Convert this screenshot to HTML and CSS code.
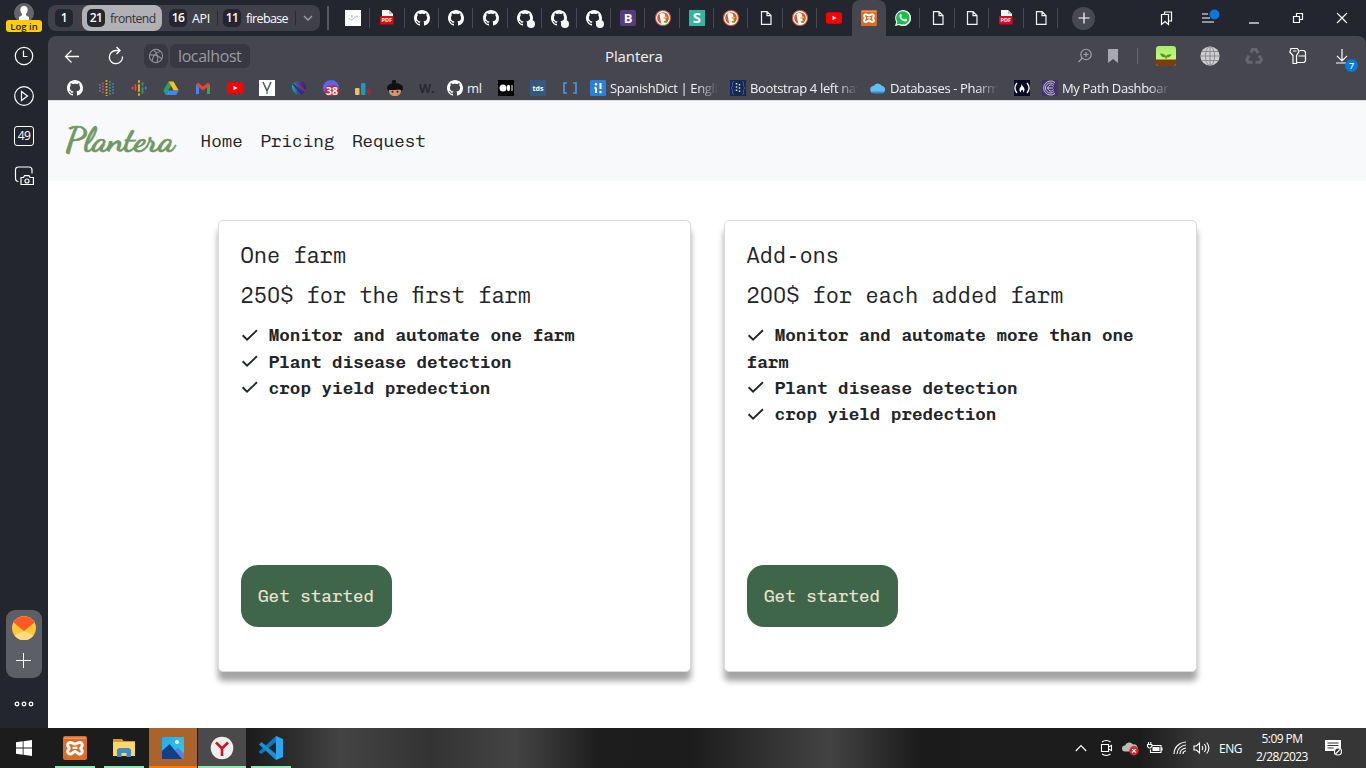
FILE: index.html
```html
<!DOCTYPE html>
<html lang="en">
<head>
<meta charset="utf-8">
<title>Plantera</title>
<link rel="stylesheet" href="styles.css">
</head>
<body>
<svg class="defs" width="0" height="0">
  <defs>
    <linearGradient id="gBlue" x1="0" y1="0" x2="1" y2="1"><stop offset="0" stop-color="#28a8e8"/><stop offset="1" stop-color="#2ad0f0"/></linearGradient>
    <linearGradient id="gSky" x1="0" y1="0" x2="0" y2="1"><stop offset="0" stop-color="#a6ee6a"/><stop offset="1" stop-color="#d9fa8c"/></linearGradient>
    <linearGradient id="gOrb" x1="0" y1="0" x2="1" y2="0"><stop offset="0" stop-color="#2fa5b0"/><stop offset=".4" stop-color="#2a5a98"/><stop offset=".7" stop-color="#502a78"/><stop offset="1" stop-color="#26306a"/></linearGradient>
  </defs>
  <symbol id="gh" viewBox="0 0 16 16"><path fill="#fff" d="M8 0C3.58 0 0 3.58 0 8c0 3.54 2.29 6.53 5.47 7.59.4.07.55-.17.55-.38 0-.19-.01-.82-.01-1.49-2.01.37-2.53-.49-2.69-.94-.09-.23-.48-.94-.82-1.13-.28-.15-.68-.52-.01-.53.63-.01 1.08.58 1.23.82.72 1.21 1.87.87 2.33.66.07-.52.28-.87.51-1.07-1.78-.2-3.64-.89-3.64-3.95 0-.87.31-1.59.82-2.15-.08-.2-.36-1.02.08-2.12 0 0 .67-.21 2.2.82.64-.18 1.32-.27 2-.27s1.36.09 2 .27c1.53-1.04 2.2-.82 2.2-.82.44 1.1.16 1.92.08 2.12.51.56.82 1.27.82 2.15 0 3.07-1.87 3.75-3.65 3.95.29.25.54.73.54 1.48 0 1.07-.01 1.93-.01 2.2 0 .21.15.46.55.38A8.01 8.01 0 0 0 16 8c0-4.42-3.58-8-8-8z"/></symbol>
  <symbol id="ghdot" viewBox="0 0 18 18"><use href="#gh" width="16" height="16"/><circle cx="14" cy="14" r="4" fill="#f4f4f4"/></symbol>
  <symbol id="pdf" viewBox="0 0 16 16"><path fill="#f5f5f5" d="M3 0h7l4 4v10H3z"/><path fill="#bbb" d="M10 0v4h4z"/><rect x="1" y="6" width="13.5" height="8.5" rx="1" fill="#e30613"/><text x="7.8" y="12.4" font-size="5.6" font-weight="700" text-anchor="middle" fill="#fff">PDF</text></symbol>
  <symbol id="duck" viewBox="0 0 16 16"><circle cx="8" cy="8" r="8" fill="#e2613a"/><circle cx="8" cy="8" r="6.4" fill="#dd5833" stroke="#fff" stroke-width="1.1"/><path fill="#fff" d="M4.500 4.200C6 2.400 9.800 2.600 10.200 5.500c.2 1.600 0 2.300.3 3.500l.8 4.800-4.600.8C5.800 11.500 5 8 4.500 4.200z"/><path fill="#f9b32b" d="M8.300 7.200c2-.8 3.300-.6 4.300-.2-.8 1.200-2.400 1.900-4.300 1.700z"/><path fill="#4caf3a" d="M8.500 11.200l3.200-.8v2.600l-2.800-.5z"/></symbol>
  <symbol id="doc" viewBox="0 0 16 16"><path fill="none" stroke="#f2f2f2" stroke-width="1.200" d="M3.500 1.600h5.500l4 4v8.800H3.500zM9 1.600v4h4"/></symbol>
  <symbol id="yt" viewBox="0 0 16 16"><rect y="2.300" width="16" height="11.400" rx="2.800" fill="#f00"/><path fill="#fff" d="M6.500 5.800l4 2.200-4 2.200z"/></symbol>
  <symbol id="xampp" viewBox="0 0 24 24"><rect width="24" height="24" rx="2" fill="#dc6c28"/><path d="M1 2.200h22" stroke="#ef9a62" stroke-width="1.500"/><path fill="none" stroke="#fff" stroke-width="3" stroke-linejoin="round" d="M7.500 6.500c1.800 0 2.700 1.500 4.500 1.500s2.700-1.500 4.500-1.500 3 1.200 2.800 2.800-1.500 1.800-1.500 3 1.300 1.400 1.500 3-1 2.800-2.800 2.800-2.700-2.500-4.500-2.500-2.700 2.500-4.500 2.500-3-1.200-2.800-2.800 1.500-1.800 1.500-3-1.300-1.400-1.500-3S5.700 6.500 7.500 6.500z"/><path d="M9.500 11.800h5" stroke="#fff" stroke-width="2.200"/></symbol>
  <symbol id="globe" viewBox="0 0 20 20"><circle cx="10" cy="10" r="9.600" fill="#cfcfcf"/><g fill="none" stroke="#85858b" stroke-width=".9"><ellipse cx="10" cy="10" rx="4.500" ry="9.600"/><path d="M10 0v20M0 10h20M2 5.500h16M2 14.500h16"/></g></symbol>
</svg>

<div class="desktop">
  <aside class="sidebar">
    <div class="account">
      <svg width="20" height="17" viewBox="0 0 20 17"><circle cx="10" cy="10" r="10" fill="#66666a"/><path fill="#fff" d="M10 3c2.600 0 3.800 1.700 3.700 4-.1 2-1 3.300-1.700 4 0 1.500.4 2 3 3v3H5v-3c2.600-1 3-1.500 3-3-.7-.7-1.600-2-1.700-4C6.200 4.700 7.400 3 10 3z"/></svg>
      <span class="login">Log in</span>
    </div>
    <svg class="side-icon" viewBox="0 0 20 20"><circle cx="10" cy="10" r="8.700"/><path d="M9.500 4.500V10.500h4"/></svg>
    <svg class="side-icon" viewBox="0 0 20 20"><circle cx="10" cy="10" r="9.300"/><path d="M7.500 5.500v9l6-4.500z"/></svg>
    <div class="count">49</div>
    <svg class="side-icon" viewBox="0 0 20 20"><path d="M4.500 15.500C2 15.500 1.500 14 1.500 12V4c0-2 1-3 3-3h10.500c2 0 3 1 3 3v3.500M7 18V11.500h2.500l1-1.800h4.500l1 1.800h3.400V18.500H7z"/><circle cx="13" cy="15" r="2"/></svg>
    <div class="pinned">
      <svg width="24" height="24" viewBox="0 0 24 24"><circle cx="12" cy="12" r="12" fill="#ffc636"/><path fill="#ffdc82" d="M12 14.500l9.500 5A12 12 0 0 1 2.500 19.500z"/><path fill="#ff5a26" d="M1.500 6.500A12 12 0 0 1 22.500 6.500L12 15z"/></svg>
      <svg width="16" height="16" viewBox="0 0 16 16"><path d="M7.500 0v15M0 7.500h15" stroke="#fff"/></svg>
    </div>
    <svg class="dots" width="20" height="6" viewBox="0 0 20 6"><g fill="none" stroke="#fff" stroke-width="1.300"><circle cx="3" cy="3" r="1.800"/><circle cx="10" cy="3" r="1.800"/><circle cx="17" cy="3" r="1.800"/></g></svg>
  </aside>

  <div class="browser">
    <div class="tabstrip">
      <div class="groups">
        <div class="group first"><b>1</b></div>
        <div class="group active"><b>21</b><span>frontend</span></div>
        <div class="group api"><b>16</b><span>API</span></div>
        <div class="group fire"><b>11</b><span>firebase</span></div>
        <svg width="10" height="6" viewBox="0 0 10 6"><path d="M1 1l4 4 4-4" fill="none" stroke="#a0a0a8" stroke-width="1.300"/></svg>
      </div>
      <div class="tabs">
        <div class="tab"><svg viewBox="0 0 16 16"><rect width="16" height="16" fill="#fff"/><path d="M4 8c1.500 2.500 3.500 2.500 5 0M7 5v3M10 6v2M12 5.500v2" fill="none" stroke="#9bb6cc"/></svg></div>
        <div class="tab"><svg><use href="#pdf"/></svg></div>
        <div class="tab"><svg><use href="#gh"/></svg></div>
        <div class="tab"><svg><use href="#gh"/></svg></div>
        <div class="tab"><svg><use href="#gh"/></svg></div>
        <div class="tab"><svg class="dotted"><use href="#ghdot"/></svg></div>
        <div class="tab"><svg class="dotted"><use href="#ghdot"/></svg></div>
        <div class="tab"><svg class="dotted"><use href="#ghdot"/></svg></div>
        <div class="tab"><svg viewBox="0 0 16 16"><rect width="16" height="16" rx="2" fill="#563d7c"/><text x="8" y="12.700" font-size="13" font-weight="700" text-anchor="middle" fill="#fff">B</text></svg></div>
        <div class="tab"><svg><use href="#duck"/></svg></div>
        <div class="tab"><svg class="over" viewBox="0 0 16 16"><rect width="16" height="16" fill="#32b5a4"/><text x="8" y="13.300" font-size="15" font-weight="700" text-anchor="middle" fill="#fff">S</text></svg></div>
        <div class="tab"><svg><use href="#duck"/></svg></div>
        <div class="tab"><svg><use href="#doc"/></svg></div>
        <div class="tab"><svg><use href="#duck"/></svg></div>
        <div class="tab before"><svg><use href="#yt"/></svg></div>
        <div class="tab current"><svg><use href="#xampp"/></svg></div>
        <div class="tab"><svg viewBox="0 0 16 16"><path fill="#fff" d="M0 16l1.200-4A8 8 0 1 1 4 14.900z"/><path fill="#12c04a" d="M1.600 14.400l.8-2.600A6.700 6.700 0 1 1 4.500 13.700z"/><path fill="#fff" d="M5 4.200c.6-.5 1.100-.4 1.300.1l.6 1.400c.1.400-.7.900-.6 1.200.6 1.200 1.500 2 2.800 2.600.4.100.9-1 1.200-.9l1.500.8c.5.300.1 1.500-.6 1.900-1.400.8-3.700-.3-5.100-1.700S3.600 5.500 5 4.200z"/></svg></div>
        <div class="tab"><svg><use href="#doc"/></svg></div>
        <div class="tab"><svg><use href="#doc"/></svg></div>
        <div class="tab"><svg><use href="#pdf"/></svg></div>
        <div class="tab"><svg><use href="#doc"/></svg></div>
      </div>
      <div class="newtab"><svg width="12" height="12" viewBox="0 0 12 12"><path d="M6 .5v11M.5 6h11" stroke="#fff" stroke-width="1.200"/></svg></div>
      <div class="winctl">
        <svg viewBox="0 0 16 16"><path d="M6.500 4V2h7v9h-2.500M3.500 4.500h7v10l-3.500-3-3.500 3z"/></svg>
        <svg viewBox="0 0 16 16"><path d="M0 4h6M0 8h8M0 12h12"/><circle cx="12.500" cy="4.500" r="5" fill="#0a78dc" stroke="none"/></svg>
        <svg viewBox="0 0 16 16"><path d="M3 13h10"/></svg>
        <svg viewBox="0 0 16 16"><path d="M3.500 6.500h6v6h-6zM6.500 6V3.500h6v6H10"/></svg>
        <svg viewBox="0 0 16 16"><path d="M3 3l10 10M13 3L3 13"/></svg>
      </div>
    </div>

    <div class="chrome">
      <div class="toolbar">
        <div class="left">
          <svg class="nav-ico" viewBox="0 0 16 18"><path d="M15 9.500H1.500M7.500 3.500l-6 6 6 6"/></svg>
          <svg class="nav-ico" viewBox="0 0 16 18"><path d="M14.500 9.500A6.600 6.600 0 1 1 8 3.500h4M8.500 0l3.500 3.500L8.500 7"/></svg>
          <div class="site"><svg width="16" height="16" viewBox="0 0 16 16"><g fill="none" stroke="#8e9098" stroke-width="1.100"><circle cx="8" cy="8" r="6.600"/><path d="M4 13C5 8 8 4 12.500 3.500M5.500 2c4 3 5 8 3.500 12.500M1.500 7c4-.5 9 .5 12.500 4"/></g></svg></div>
          <div class="url">localhost</div>
        </div>
        <div class="title">Plantera</div>
        <div class="right">
          <span class="slot s28"><svg width="16" height="16" viewBox="0 0 16 16"><g fill="none" stroke="#a6a6ad" stroke-width="1.100"><circle cx="9" cy="6.500" r="5.200"/><path d="M5.300 10.200L1.500 14M6.500 6.500h5M9 4v5"/></g></svg></span>
          <span class="slot s28"><svg width="12" height="14" viewBox="0 0 12 14"><path fill="#a8a8ae" d="M1 0h10v14l-5-4-5 4z"/></svg></span>
          <span class="slot s17"><i></i></span>
          <span class="slot"><svg width="20" height="20" viewBox="0 0 20 20"><rect width="20" height="20" rx="3" fill="url(#gSky)"/><path fill="#7b3d10" d="M0 13.500h20V17a3 3 0 0 1-3 3H3a3 3 0 0 1-3-3z"/><path fill="#4c9a24" d="M4 7.500c4-.2 5.500 1.200 6 3 .5-1.500 2.500-2.500 5.500-2-1 2.500-3 3.200-5 3v1.500H9.500v-1.500C7 11.500 5 10.500 4 7.500z"/></svg></span>
          <span class="slot"><svg width="20" height="20"><use href="#globe"/></svg></span>
          <span class="slot"><svg width="18" height="18" viewBox="0 0 18 18"><g fill="none" stroke="#66666d" stroke-width="3"><path d="M6 5.500L7.500 2.500h3.500l2 3.500M14 8.500l2.500 4-1.500 2.800h-4.500M7.500 15.300H3L1.800 12.500 4 8.500"/></g></svg></span>
          <span class="slot"><svg width="18" height="18" viewBox="0 0 18 18"><g fill="none" stroke="#fff" stroke-width="1.200"><path d="M2 1.500h6.500l1.500 3-2.500 4v8H4v-8L.8 5zM4 4h3.500"/><path d="M10.500 3.500h4.500l1.500 1.500v9L15 15.500H8M9.500 9H16.500"/></g></svg></span>
          <span class="slot"><svg class="dl" width="24" height="26" viewBox="0 0 24 26"><path d="M9 6v12M4 13l5 5 5-5M3 20h12" fill="none" stroke="#fff" stroke-width="1.200"/></svg><em>7</em></span>
        </div>
      </div>
      <div class="bookmarks">
        <div class="bm"><svg><use href="#gh"/></svg></div>
        <div class="bm"><svg viewBox="0 0 16 16"><g stroke-width="1.800" stroke-dasharray="1.800 1.200"><path d="M1 4v8" stroke="#4a78c8"/><path d="M4 2.500v11" stroke="#d6493a"/><path d="M7.500 0v16" stroke="#e0a52d"/><path d="M11 1v14" stroke="#2f9c60"/><path d="M14 3v11" stroke="#3877d8"/></g></svg></div>
        <div class="bm"><svg viewBox="0 0 16 16"><g stroke-width="1.800" stroke-linecap="round"><path d="M1.500 7.500v1M4.500 5v5" stroke="#e8453c"/><path d="M8 1v1M8 5v6M8 14v1" stroke="#f9ab2d"/><path d="M11.500 3v2M11.500 8v5" stroke="#2e9e57"/><path d="M14.700 7.500v1" stroke="#3d7de8"/></g></svg></div>
        <div class="bm"><svg viewBox="0 0 16 16"><path fill="#21a464" d="M5.500 1.500L8 6l-5.200 9L.3 10.500z"/><path fill="#fbc116" d="M5.500 1.500h5l5.200 9h-5z"/><path fill="#4285f4" d="M5.300 10.500h10.400L13.200 15H2.800z"/></svg></div>
        <div class="bm"><svg viewBox="0 0 16 16"><path fill="#4285f4" d="M1 4l3 2.300V14H1z"/><path fill="#34a853" d="M15 4l-3 2.300V14h3z"/><path d="M2 3.800l6 4.700 6-4.700" fill="none" stroke="#ea4335" stroke-width="3"/></svg></div>
        <div class="bm"><svg><use href="#yt"/></svg></div>
        <div class="bm"><svg viewBox="0 0 16 16"><rect width="16" height="16" fill="#fff"/><path d="M4 2l4 9 4-9" fill="none" stroke="#555" stroke-width="1.500"/><path d="M8 11v3" stroke="#3ab8b8" stroke-width="1.700"/></svg></div>
        <div class="bm"><svg viewBox="0 0 16 16"><path d="M1.500 4C5-.5 15 0 15 7.500c0 7-6 8-8 7.500C3 14-.5 8 1.500 4z" fill="url(#gOrb)"/><path d="M4 2l10 9" stroke="#a52a78" stroke-width="1.500"/><path d="M2 4l9 10" stroke="#1f356e" stroke-width="1.500"/></svg></div>
        <div class="bm"><svg viewBox="0 0 16 16"><circle cx="8" cy="8" r="8" fill="#5865f2"/><rect x="2" y="5.500" width="14" height="10.500" rx="5" fill="#dc1d24"/><text x="9" y="14.500" font-size="10.500" font-weight="700" text-anchor="middle" fill="#fff">38</text></svg></div>
        <div class="bm"><svg viewBox="0 0 16 16"><rect x="0" y="8" width="4.500" height="7" rx="1" fill="#edc257"/><rect x="6" y="3" width="4.500" height="12" rx="1" fill="#1d96c4"/><rect x="12" y="8.500" width="4" height="6.500" rx="1" fill="#9b2a37"/></svg></div>
        <div class="bm"><svg viewBox="0 0 16 16"><circle cx="7" cy="2" r="2.200" fill="#111"/><ellipse cx="8" cy="8" rx="8" ry="5" fill="#111"/><path fill="#d9936e" d="M2 10c4 .5 9-1 12 0 0 4-2 6-6 6s-6-2-6-6z"/><circle cx="5.500" cy="11.700" r="1" fill="#222"/><circle cx="10.500" cy="11.700" r="1" fill="#222"/></svg></div>
        <div class="bm"><svg viewBox="0 0 16 16"><text x="0" y="12.800" font-size="12.500" font-weight="700" fill="#292a2e" textLength="15.500">W.</text></svg></div>
        <div class="bm titled ml"><svg><use href="#gh"/></svg><span>ml</span></div>
        <div class="bm"><svg viewBox="0 0 16 16"><rect width="16" height="16" fill="#000"/><circle cx="5" cy="8" r="3.500" fill="#fff"/><ellipse cx="10.500" cy="8" rx="1.600" ry="3.300" fill="#fff"/><path d="M14 5v6" stroke="#fff"/></svg></div>
        <div class="bm"><svg viewBox="0 0 16 16"><rect width="16" height="16" fill="#35587c"/><text x="8" y="10.500" font-size="7" font-weight="700" text-anchor="middle" fill="#fff">tds</text></svg></div>
        <div class="bm"><svg viewBox="0 0 16 16"><path d="M5 3H2v10h3M11 3h3v10h-3" fill="none" stroke="#4a96dc" stroke-width="1.700"/></svg></div>
        <div class="bm titled"><svg viewBox="0 0 16 16"><rect width="16" height="16" rx="1.500" fill="#2a80dc"/><path d="M6 7.500v5.500M10.500 3v6M4.500 8H6" stroke="#fff" stroke-width="2"/><circle cx="6" cy="4.300" r="1.200" fill="#fff"/><circle cx="10.500" cy="12" r="1.200" fill="#fff"/></svg><span>SpanishDict | English</span></div>
        <div class="bm titled"><svg viewBox="0 0 16 16"><rect width="16" height="16" fill="#162750"/><path d="M4 1.500c-3 0 0 5-3 6.500 3 1.500 0 6.500 3 6.500M12 1.500c3 0 0 5 3 6.500-3 1.500 0 6.500-3 6.500" fill="none" stroke="#3766cf"/><path d="M6.500 3v10M9.500 4v9" stroke="#d7ddf0" stroke-width="1.500" stroke-dasharray="1.500 1.800"/></svg><span>Bootstrap 4 left navbar</span></div>
        <div class="bm titled"><svg viewBox="0 0 16 16"><path fill="#62bdf0" d="M4 13a3.500 3.500 0 0 1-.5-7A4.800 4.800 0 0 1 12 6a3.600 3.600 0 0 1 .5 7z"/><path fill="#2f8fd0" d="M1.500 11.500h13l-2 2h-9z"/></svg><span>Databases - Pharmacy</span></div>
        <div class="bm"><svg viewBox="0 0 16 16"><rect width="16" height="16" fill="#0a0a23"/><path d="M3 3c-2.500 3-2.500 7 0 10M13 3c2.500 3 2.500 7 0 10" fill="none" stroke="#fff" stroke-width="1.300"/><path fill="#fff" d="M7.500 3.500c.5 3 3 3.500 3 6 0 1.500-.7 2.500-1.500 3 .4-1.500 0-2.500-1-3-.5 1-1.500 1.500-.8 3C5 11.500 5 9 6.300 7.500 7.500 6 7.500 5 7.500 3.500z"/></svg></div>
        <div class="bm titled"><svg viewBox="0 0 16 16"><rect width="16" height="16" fill="#42346a"/><g fill="none" stroke="#d8d4e8" stroke-width=".9"><path d="M13 2.500A7 7 0 1 0 13 13.500M12 4.500A5 5 0 1 0 12 11.500M11.500 6.500A3 3 0 1 0 11.500 9.500M5 8h6"/></g></svg><span>My Path Dashboard</span></div>
      </div>
    </div>

    <main class="page">
      <nav class="navbar">
        <a class="brand">Plantera</a>
        <a>Home</a><a>Pricing</a><a>Request</a>
      </nav>
      <section class="plans">
        <article class="card">
          <h5>One farm</h5>
          <h5>250$ for the first farm</h5>
          <ul>
            <li><svg class="check" viewBox="0 0 16 16"><path d="M1.500 7.500l4 4L14.500 3"/></svg> Monitor and automate one farm</li>
            <li><svg class="check" viewBox="0 0 16 16"><path d="M1.500 7.500l4 4L14.500 3"/></svg> Plant disease detection</li>
            <li><svg class="check" viewBox="0 0 16 16"><path d="M1.500 7.500l4 4L14.500 3"/></svg> crop yield predection</li>
          </ul>
          <button>Get started</button>
        </article>
        <article class="card">
          <h5>Add-ons</h5>
          <h5>200$ for each added farm</h5>
          <ul>
            <li><svg class="check" viewBox="0 0 16 16"><path d="M1.500 7.500l4 4L14.500 3"/></svg> Monitor and automate more than one farm</li>
            <li><svg class="check" viewBox="0 0 16 16"><path d="M1.500 7.500l4 4L14.500 3"/></svg> Plant disease detection</li>
            <li><svg class="check" viewBox="0 0 16 16"><path d="M1.500 7.500l4 4L14.500 3"/></svg> crop yield predection</li>
          </ul>
          <button>Get started</button>
        </article>
      </section>
    </main>
  </div>

  <footer class="taskbar">
    <div class="app start"><svg width="16" height="16" viewBox="0 0 16 16"><path fill="#fff" d="M0 2.300L6.700 1.300v6.300H0zM7.500 1.200L16 0v7.600H7.500zM0 8.400h6.700v6.300L0 13.700zM7.500 8.400H16V16l-8.500-1.200z"/></svg></div>
    <div class="app run"><svg width="24" height="24"><use href="#xampp"/></svg></div>
    <div class="app run"><svg width="22" height="20" viewBox="0 0 22 20"><path fill="#d99a1c" d="M0 1h9l1.500 2H22v3H0z"/><path fill="#fbd768" d="M0 4h22v14H0z"/><path fill="#3f8cc8" d="M4 19v-7.500L6 10h10l2 1.500V19h-4.500v-4h-5v4z"/></svg></div>
    <div class="app photos"><svg width="22" height="22" viewBox="0 0 22 22"><rect width="22" height="22" rx="1" fill="url(#gBlue)"/><circle cx="15" cy="5" r="2" fill="#fff"/><path fill="#5a80dc" d="M9 17l7-6.500 6 6V22H9z"/><path fill="#123f88" d="M0 14l7.500-7L20 22H0z"/></svg></div>
    <div class="app yandex"><svg width="24" height="24" viewBox="0 0 24 24"><circle cx="12" cy="12" r="11.300" fill="#eee"/><path d="M6 6.500l6 6 6-6M12 12v8" fill="none" stroke="#cf1225" stroke-width="2.600"/></svg></div>
    <div class="app run"><svg width="24" height="24" viewBox="0 0 24 24"><path fill="#0879c4" d="M17 0l1 5L2.500 18 0 16.500v-1z"/><path fill="#1793dc" d="M0 8.500L2.500 6 18 19l-1 5z"/><path fill="#28a8f0" d="M17 0l7 3v18l-7 3z"/></svg></div>
    <div class="tray">
      <svg class="t-up" width="12" height="8" viewBox="0 0 12 8"><path d="M.8 7L6 1.500 11.200 7"/></svg>
      <svg class="t-cam" width="14" height="16" viewBox="0 0 14 16"><path d="M1.500 4.500h7v7h-7zM8.500 7l3-1.500v5l-3-1.500M2 2C4.500.3 8 .3 10.500 2M2 14c2.500 1.700 6 1.700 8.500 0"/></svg>
      <svg class="t-cloud" width="17" height="15" viewBox="0 0 17 15"><path d="M3 10.500a3 3 0 0 1 0-6A4.500 4.500 0 0 1 11 3.500a3.600 3.600 0 0 1 2 7z" fill="#bbb" stroke="none"/><circle cx="12" cy="9.800" r="4.700" fill="#d62a35" stroke="none"/><path d="M10.300 8.100l3.400 3.400M13.700 8.100l-3.400 3.400"/></svg>
      <svg class="t-bat" width="17" height="14" viewBox="0 0 17 14"><path d="M5.500 4.500H15v7H4.500V8.500M2.500 1v2M4.800 1v2M1.500 3.500h4.300v2L4.300 7H3L1.500 5.500zM16 6.500v3"/><path d="M6.500 6h7v4h-7z" fill="#fff" stroke="none"/></svg>
      <svg class="t-wifi" width="14" height="14" viewBox="0 0 14 14"><path d="M1 13C1 6.500 6 1.500 13 1M4 13c0-5 4-8.500 9-9M7 13c0-3.500 3-5.500 6-6M10 13c0-2 1.500-3 3-3.200"/></svg>
      <svg class="t-vol" width="17" height="14" viewBox="0 0 17 14"><path d="M1 5h2.500L6.500 2v10L3.500 9H1zM9 5c1 1.300 1 2.700 0 4M11.300 3c2 2.500 2 5.500 0 8M13.700 1.500c2.800 3.500 2.800 7.500 0 11"/></svg>
      <span class="lang">ENG</span>
      <div class="clock"><span>5:09 PM</span><span>2/28/2023</span></div>
      <svg class="t-note" width="17" height="16" viewBox="0 0 17 16"><path d="M0 0h16v11h-4l-3 4v-4H0z" fill="#fff" stroke="none"/><path d="M2.500 3h11M2.500 5.500h11M2.500 8h6" stroke="#333"/><circle cx="13" cy="11.500" r="3.500" fill="#333"/><path d="M11 13.500l4-4"/></svg>
    </div>
  </footer>
</div>
</body>
</html>
```
FILE: styles.css
```css
* { box-sizing: border-box; }
body { margin: 0; background: #fff; font-family: "Open Sans", "Noto Sans", sans-serif; }
svg { display: block; flex: none; }
.defs { position: absolute; }
.desktop { width: 1366px; height: 768px; display: grid; grid-template: 728px 40px / 48px 1318px; overflow: hidden; background: #23262f; }

/* left browser panel */
.sidebar { display: flex; flex-direction: column; align-items: center; color: #fff; padding-top: 3px; }
.account { height: 43px; display: flex; flex-direction: column; align-items: center; }
.login { width: 36px; height: 12px; border-radius: 3px; background: #ffcc0a; color: #222; font-size: 9.500px; font-weight: 600; line-height: 13px; text-align: center; white-space: nowrap; }
.side-icon { width: 20px; height: 20px; margin-bottom: 20px; fill: none; stroke: #fff; stroke-width: 1.200; }
.count { width: 20px; height: 20px; margin-bottom: 20px; border: 1px solid #fff; border-radius: 3px; font-size: 12px; line-height: 18px; text-align: center; letter-spacing: -.5px; }
.pinned { width: 36px; height: 68px; margin-top: auto; border-radius: 9px; background: #5d5f67; display: flex; flex-direction: column; align-items: center; padding-top: 6px; gap: 13px; }
.dots { margin: 23px 0 21px; }

/* tabs */
.browser { display: flex; flex-direction: column; min-width: 0; }
.tabstrip { height: 36px; display: flex; align-items: center; }
.groups { width: 272px; height: 26px; border-radius: 8px; background: #3f4049; display: flex; align-items: center; color: #fff; font-size: 12.500px; padding-left: 7px; flex: none; }
.group { display: flex; align-items: center; height: 26px; }
.group b { width: 18px; height: 18px; border-radius: 5px; background: #23262f; font-size: 12px; font-weight: 600; line-height: 18px; text-align: center; margin-right: 5px; letter-spacing: -.5px; flex: none; }
.group span { font-weight: 500; white-space: nowrap; }
.first { width: 27px; }
.active { width: 80px; padding-left: 5px; border-radius: 8px; background: #b1b1b5; color: #33343b; }
.active b { color: #fff; }
.active span { font-size: 12.200px; letter-spacing: -.550px; }
.api { width: 55px; padding-left: 7px; }
.api span { letter-spacing: -.300px; }
.fire { width: 79px; height: 14px; padding-left: 5px; border-left: 1px solid #282a32; border-right: 1px solid #282a32; margin-right: 7px; }
.fire span { letter-spacing: -.650px; }
.tabs { display: flex; height: 36px; margin-left: 7px; padding-left: 8.800px; width: 732px; position: relative; flex: none; }
.tabs::before { content: ""; position: absolute; left: 0; top: 6px; width: 2px; height: 24px; background: #565861; }
.tab { width: 34.400px; height: 36px; display: flex; align-items: center; justify-content: center; background: linear-gradient(#474a53, #474a53) right 8px / 1px 20px no-repeat; flex: none; }
.tab svg { width: 16px; height: 16px; }
.tab .dotted { width: 18px; height: 18px; margin: 2px 0 0 2px; }
.over { overflow: visible; }
.before { background: none; }
.current { background: #46464f; border-radius: 8px 8px 0 0; }
.newtab { width: 23px; height: 23px; border-radius: 50%; background: #484952; display: flex; align-items: center; justify-content: center; margin-left: 13px; }
.winctl { margin-left: auto; display: flex; padding-right: 16px; gap: 28px; }
.winctl svg { width: 16px; height: 16px; fill: none; stroke: #fff; stroke-width: 1.200; overflow: visible; }

/* toolbar */
.chrome { height: 64px; background: #46464f; border-radius: 8px 8px 0 0; color: #f2f2f4; }
.toolbar { height: 40px; display: flex; align-items: center; }
.left { width: 557px; display: flex; align-items: center; padding-left: 16px; }
.nav-ico { width: 16px; height: 18px; fill: none; stroke: #fff; stroke-width: 1.300; margin-right: 28px; overflow: visible; }
.nav-ico + .nav-ico { margin-right: 20px; }
.site { width: 24px; height: 24px; border-radius: 6px; background: #373842; display: flex; align-items: center; justify-content: center; margin-right: 2px; }
.url { width: 80px; height: 24px; border-radius: 6px; background: #373842; color: #9a9ba4; padding-left: 8px; font-size: 16px; line-height: 24px; letter-spacing: -.400px; }
.title { font-size: 15px; letter-spacing: -.100px; }
.right { margin-left: auto; display: flex; align-items: center; padding-right: 2px; }
.slot { width: 44px; height: 40px; display: flex; align-items: center; justify-content: center; position: relative; }
.s28 { width: 28px; }
.s17 { width: 17px; }
.slot i { width: 1px; height: 16px; background: #67686f; margin-left: 3px; }
.dl { margin-left: 6px; }
.slot em { position: absolute; left: 25px; top: 23px; width: 13px; height: 13px; border-radius: 50%; background: #0a78dc; font: 600 9px/13px "Open Sans", sans-serif; text-align: center; }
.bookmarks { height: 24px; display: flex; align-items: center; gap: 16px; padding-left: 19px; }
.bm { width: 16px; height: 20px; display: flex; align-items: center; gap: 4px; flex: none; }
.bm svg { width: 16px; height: 16px; }
.titled { width: 128px; margin-left: -4px; }
.titled span { width: 108px; overflow: hidden; white-space: nowrap; font-size: 13px; line-height: 20px; letter-spacing: -.350px; mask-image: linear-gradient(90deg, #000 80%, transparent); }
.titled.ml { width: 35px; }
.ml span { width: 17px; overflow: visible; mask-image: none; }

/* web page */
.page { flex: 1; background: #fff; color: #212529; font-family: "Chivo Mono", "Liberation Mono", monospace; }
.navbar { height: 81px; background: #f8f9fb; border-top: 1px solid #dcdde4; display: flex; align-items: center; padding: 0 0 2px 17px; font-size: 17.600px; font-weight: 300; gap: 17.600px; }
.brand { width: 118px; color: #6f9863; font-family: "Dancing Script", "Liberation Serif", cursive; font-size: 34.700px; font-weight: 700; line-height: 40px; -webkit-text-stroke: .700px #6f9863; }
.plans { display: flex; gap: 33px; padding: 39px 0 0 170px; }
.card { width: 473px; height: 452px; border: 1px solid #dbdbdb; border-radius: 5px; background: #fff; box-shadow: 0 9px 6px rgba(0, 0, 0, .36); padding: 22px 21.600px 44px; display: flex; flex-direction: column; align-items: flex-start; }
.card h5 { margin: 0 0 13.300px; font-size: 22px; font-weight: 300; line-height: 26.400px; }
.card ul { list-style: none; margin: -.300px 0 0; padding: 0; font-size: 17.600px; line-height: 26.400px; font-weight: 600; }
.check { display: inline-block; width: 17.600px; height: 17.600px; vertical-align: -3px; fill: none; stroke: #212529; stroke-width: 1.700; }
.card button { width: 151px; height: 62px; margin-top: auto; padding: 0 0 2px; border: 0; border-radius: 17px; background: #3f654a; color: #e8e3ce; font: 400 17.600px "Chivo Mono", "Liberation Mono", monospace; }

/* taskbar */
.taskbar { grid-column: 1 / 3; display: flex; background: linear-gradient(90deg, #1c1c1c 0, #1c1c1c 250px, #303030 300px, #444 340px, #333 430px, #444 515px, #1d1d1d 600px, #1c1c1c 690px, #434343 830px, #1b1b1b 920px, #1c1c1c 1140px, #373737 1200px, #363636 1360px); color: #fff; }
.app { width: 48px; height: 40px; margin-right: 1px; display: flex; align-items: center; justify-content: center; flex: none; }
.start { width: 48px; margin-right: 3px; }
.run { background: linear-gradient(#8fe8b8, #8fe8b8) center bottom / 40px 2px no-repeat; }
.photos { background: #aa632a; border-bottom: 2px solid #ff7b00; padding-top: 2px; }
.yandex { background: #4a4a4a; border-bottom: 2px solid #8fe8b8; padding-top: 2px; }
.tray { margin-left: auto; display: flex; align-items: center; padding-right: 24px; font-size: 12px; }
.tray svg { fill: none; stroke: #fff; stroke-width: 1.100; }
.t-up { margin-right: 13px; }
.t-cam { margin-right: 8px; }
.t-cloud { margin-right: 7px; }
.t-bat { margin-right: 10px; }
.t-wifi { margin-right: 6px; }
.t-vol { margin-right: 9px; }
.lang { width: 22px; letter-spacing: -.500px; white-space: nowrap; }
.clock { width: 82px; margin-right: 2px; display: flex; flex-direction: column; align-items: center; line-height: 18px; letter-spacing: -.550px; }
```
